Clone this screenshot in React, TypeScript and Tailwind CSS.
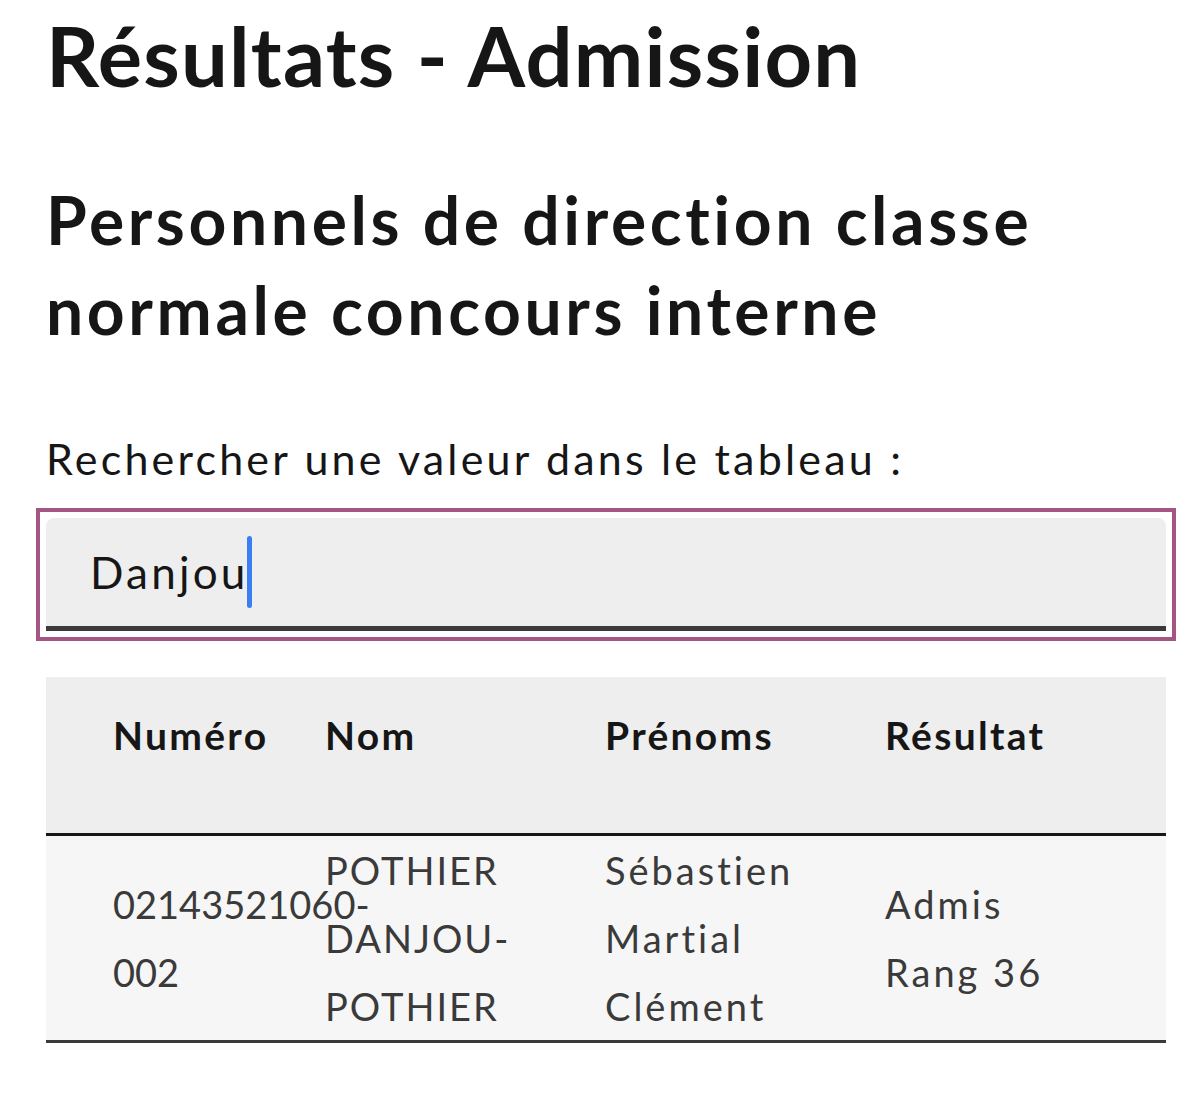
const rows = [
  {
    numero: "02143521060-002",
    nom: "POTHIER DANJOU-POTHIER",
    prenoms: "Sébastien Martial Clément",
    resultat: "Admis Rang 36",
  },
];

export default function App() {
  return (
    <div className="min-h-screen bg-white pl-[46px] pr-[34px] font-['Lato','Liberation_Sans',sans-serif] text-[#161616] [font-variant-ligatures:none]">
      <h1 className="pt-[7px] text-[83px] leading-[96px] font-bold tracking-[1.2px]">Résultats - Admission</h1>

      <h2 className="mt-[72px] text-[66px] leading-[90px] font-bold tracking-[3.6px]">
        Personnels de direction classe normale concours interne
      </h2>

      <label className="mt-[78px] block text-[43px] leading-[52px] tracking-[3.2px]">
        Rechercher une valeur dans le tableau :
      </label>

      <div className="mt-[33px] outline-[4px] outline-offset-[6px] outline-solid outline-[#a35583]">
        <div
          role="searchbox"
          className="flex h-[113px] items-center rounded-t-[8px] border-b-[5px] border-[#3a3a3a] bg-[#eeeeee] pl-[44px] text-[44px] tracking-[3.2px]"
        >
          <span>Danjou</span>
          <span className="-ml-[2px] inline-block h-[72px] w-[5px] rounded-full bg-[#3b7df2]" />
        </div>
      </div>

      <div className="mt-[46px]">
        <div className="grid h-[159px] grid-cols-[212px_280px_280px_1fr] border-b-[3px] border-[#161616] bg-[#eeeeee] pl-[67px] pt-[34px] text-[39px] leading-[48px] font-bold tracking-[2.3px]">
          <div>Numéro</div>
          <div>Nom</div>
          <div>Prénoms</div>
          <div>Résultat</div>
        </div>
        {rows.map((r) => (
          <div
            key={r.numero}
            className="grid h-[207px] grid-cols-[212px_280px_280px_1fr] items-center border-b-[3px] border-[#3a3a3a] bg-[#f6f6f6] pl-[67px] text-[38px] leading-[68px] text-[#3a3a3a]"
          >
            <div>{r.numero}</div>
            <div className="pr-[40px] tracking-[2px]">{r.nom}</div>
            <div className="pr-[40px] tracking-[3px]">{r.prenoms}</div>
            <div className="pr-[80px] tracking-[3px]">{r.resultat}</div>
          </div>
        ))}
      </div>
    </div>
  );
}
